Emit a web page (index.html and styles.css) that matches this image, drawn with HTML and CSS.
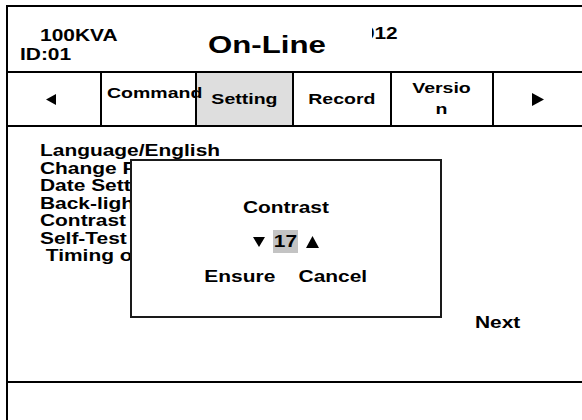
FILE: index.html
```html
<!DOCTYPE html>
<html>
<head>
<meta charset="utf-8">
<link rel="stylesheet" href="styles.css">
</head>
<body>
<div class="screen">
  <header class="hdr">
    <div class="hleft">
      <div class="kva"><span class="s">100KVA</span></div>
      <div class="id"><span class="s">ID:01</span></div>
    </div>
    <div class="title"><span class="s">On-Line</span></div>
    <div class="num"><span class="s">2012</span></div>
  </header>
  <nav class="tabs">
    <div class="tab prev"><svg width="10" height="11" viewBox="0 0 10 11"><path d="M0 5.5L10 0V11Z"/></svg></div>
    <div class="tab cmd"><span class="s">Command</span></div>
    <div class="tab active"><span class="s c">Setting</span></div>
    <div class="tab rec"><span class="s c">Record</span></div>
    <div class="tab ver"><span class="s c">Versio<br>n</span></div>
    <div class="tab nxt"><svg width="12" height="13" viewBox="0 0 12 13"><path d="M0 0L12 6.5L0 13Z"/></svg></div>
  </nav>
  <main class="content">
    <ul class="menu">
      <li><span class="s">Language/English</span></li>
      <li><span class="s">Change Password</span></li>
      <li><span class="s">Date Setting</span></li>
      <li><span class="s">Back-light Time</span></li>
      <li><span class="s">Contrast</span></li>
      <li><span class="s">Self-Test</span></li>
      <li><span class="s">&nbsp;Timing on/off</span></li>
    </ul>
    <div class="next"><span class="s">Next</span></div>
    <div class="dialog">
      <div class="dtitle"><span class="s c">Contrast</span></div>
      <div class="stepper">
        <svg class="tri" width="12" height="10" viewBox="0 0 12 10"><path d="M0 0H12L6 10Z"/></svg>
        <div class="val"><span class="s c">17</span></div>
        <svg class="tri" width="13" height="12" viewBox="0 0 13 12"><path d="M6.5 0L13 12H0Z"/></svg>
      </div>
      <div class="actions">
        <span class="s c">Ensure</span>
        <span class="s c">Cancel</span>
      </div>
    </div>
  </main>
  <footer class="foot"></footer>
</div>
</body>
</html>
```
FILE: styles.css
```css
* { box-sizing: border-box; }
html, body {
  margin: 0;
  padding: 0;
  overflow: hidden;
  background: #fff;
}
body {
  font-family: "Liberation Sans", Arial, sans-serif;
  font-weight: bold;
  color: #000;
}
.screen {
  margin: 5px 0 0 6px;
  width: 578px;
  height: 430px;
  border: 2px solid #000;
  display: flex;
  flex-direction: column;
}
.s {
  display: inline-block;
  white-space: nowrap;
  transform: scaleX(1.23);
  transform-origin: left center;
}
.s.c { transform-origin: center center; }

/* header */
.hdr {
  height: 66px;
  flex: none;
  border-bottom: 2px solid #000;
  display: flex;
  align-items: flex-start;
}
.hleft {
  width: 200px;
  padding: 20px 0 0 12px;
  font-size: 17px;
  line-height: 18px;
}
.kva { padding-left: 20px; }
.id { margin-top: 1px; }
.title {
  width: 164px;
  margin-top: 24px;
  font-size: 24px;
  line-height: 28px;
}
.title .s { transform: scaleX(1.3); }
.num {
  width: 26px;
  margin-top: 18px;
  overflow: hidden;
  display: flex;
  justify-content: flex-end;
  font-size: 16px;
  line-height: 18px;
}
.num .s { transform: scaleX(1.3); transform-origin: right center; }

/* tabs */
.tabs {
  height: 54px;
  flex: none;
  border-bottom: 2px solid #000;
  display: flex;
  font-size: 15px;
  line-height: 18px;
}
.tabs .s { transform: scaleX(1.3); }
.tab {
  border-left: 2px solid #000;
  display: flex;
  align-items: center;
  justify-content: center;
  text-align: center;
}
.tab.prev { border-left: none; width: 92px; padding-right: 7px; }
.tab.cmd {
  width: 95px;
  justify-content: flex-start;
  align-items: flex-start;
  padding: 11px 0 0 5px;
  position: relative;
  z-index: 1;
}
.tab.active { width: 97px; background: #dedede; }
.tab.rec { width: 98px; }
.tab.ver { width: 102px; line-height: 21px; padding-bottom: 2px; }
.tab.nxt { flex: 1; }

/* content */
.content {
  height: 256px;
  flex: none;
  border-bottom: 2px solid #000;
  position: relative;
  padding: 15px 0 0 32px;
  font-size: 17px;
  line-height: 17.5px;
}
.menu {
  list-style: none;
  margin: 0;
  padding: 0;
}
.next {
  margin-top: 49px;
  padding-left: 435px;
}
.dialog {
  position: absolute;
  left: 122px;
  top: 32px;
  width: 312px;
  height: 159px;
  border: 2px solid #1a1a1a;
  background: #fff;
  display: flex;
  flex-direction: column;
  align-items: center;
  padding-top: 38px;
  line-height: 18px;
}
.stepper {
  margin-top: 13px;
  height: 23px;
  display: flex;
  align-items: center;
  gap: 8px;
}
.val {
  width: 25px;
  height: 23px;
  background: #c3c3c3;
  display: flex;
  align-items: center;
  justify-content: center;
}
.actions {
  margin-top: 15px;
  display: flex;
  gap: 37px;
}
.foot { flex: 1; }
```
